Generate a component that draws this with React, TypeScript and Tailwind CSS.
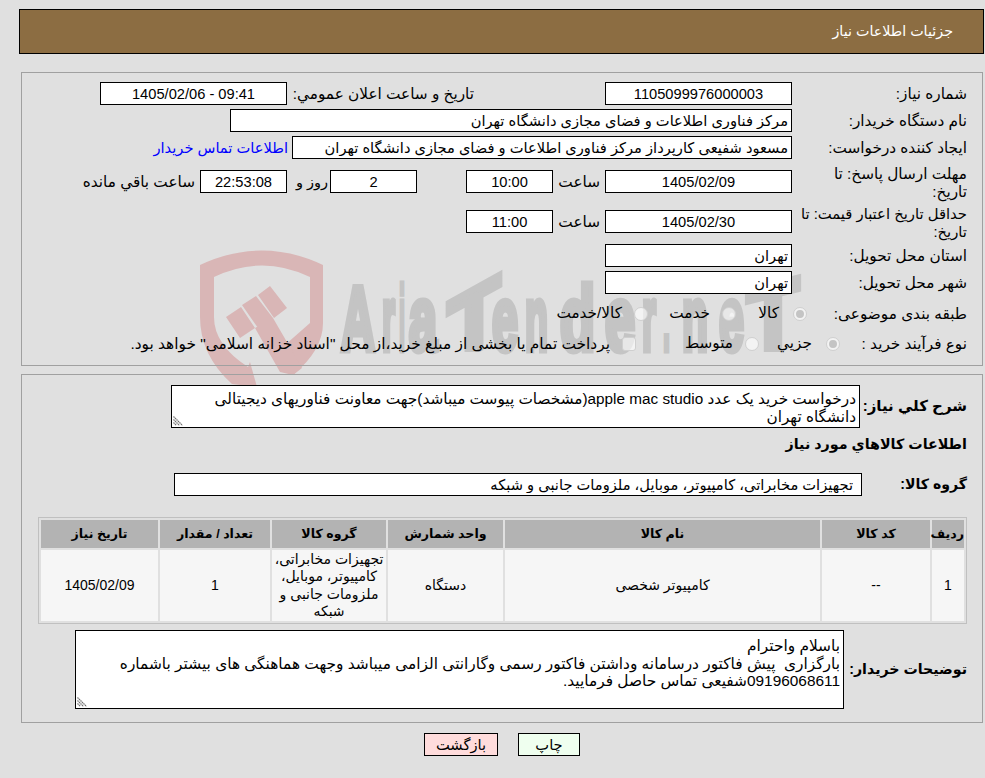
const fieldCls = 'h-[23px] shrink-0 border border-black bg-white text-[14.67px] text-black outline-none'

function Field({ value, w, center = true, bg = 'bg-white', ltr = false }: { value: string; w: string; center?: boolean; bg?: string; ltr?: boolean }) {
  return (
    <input
      readOnly
      dir={ltr ? 'ltr' : 'rtl'}
      value={value}
      className={`${fieldCls} ${w} ${bg} px-[3px] ${center ? 'text-center' : 'text-right'}`}
    />
  )
}

function Label({ children, w, bold = false }: { children: React.ReactNode; w: string; bold?: boolean }) {
  return <div className={`shrink-0 ${w} ${bold ? 'whitespace-nowrap font-bold' : 'pt-[2px]'}`}>{children}</div>
}

function Radio({ on = false, square = false }: { on?: boolean; square?: boolean }) {
  return (
    <span
      className={`flex h-[14px] w-[14px] shrink-0 items-center justify-center border border-[#cfcfcf] bg-white/60 ${
        square ? 'rounded-[3px]' : 'rounded-full'
      }`}
    >
      {on && <span className="h-[8px] w-[8px] rounded-full bg-[#c4c4c4]" />}
    </span>
  )
}

function Option({ text, w, on, square }: { text: string; w: string; on?: boolean; square?: boolean }) {
  return (
    <div className={`flex shrink-0 items-center ${on ? 'gap-[14px]' : 'gap-[12px]'} ${w}`}>
      <Radio on={on} square={square} />
      <span className="whitespace-nowrap">{text}</span>
    </div>
  )
}

function Grip() {
  return (
    <svg className="pointer-events-none absolute bottom-[2px] left-[2px]" width="10" height="10" viewBox="0 0 10 10">
      <path d="M0.5 3.5L6.5 9.5M0.5 0.5L9.5 9.5M0.5 6.5L3.5 9.5" stroke="#707070" strokeWidth="1.2" strokeDasharray="1.5 0.6" fill="none" />
    </svg>
  )
}

function Watermark() {
  const gray = '#c4c4c4'
  const letters: [string, number, number][] = [
    ['A', 341, 34],
    ['r', 382, 13],
    ['i', 399, 6],
    ['a', 409, 28],
    ['e', 492, 26],
    ['n', 525, 23],
    ['d', 560, 35],
    ['e', 605, 30],
    ['r', 642, 14],
    ['.', 663, 7],
    ['n', 682, 26],
    ['e', 719, 25],
  ]
  const common = {
    fill: gray,
    stroke: gray,
    strokeWidth: 7,
    fontWeight: 700,
    fontFamily: "'Liberation Sans', sans-serif",
    lengthAdjust: 'spacingAndGlyphs' as const,
  }
  return (
    <svg direction="ltr" className="pointer-events-none absolute left-0 top-0" width="985" height="778" viewBox="0 0 985 778">
      <defs>
        <clipPath id="wm-base">
          <rect x="300" y="240" width="600" height="112" />
        </clipPath>
      </defs>
      <path
        fill="#d9b6b6"
        fillRule="evenodd"
        d="M200 265Q262 236 323 265L323 323Q323 350 293 375L277 352L310 323L310 277Q262 254 214 277L214 317Q214 345 248 367L250 362L257 387L232 384Q200 355 200 317Z"
      />
      <path fill="#d9b6b6" d="M226 317L241 307L255 328L240 338ZM242 305L256 296L273 318L258 328ZM258 295L270 286L287 308L274 318ZM255 328L273 318L302 368L293 375L280 372Z" />
      {letters.map(([c, x, len], i) => (
        <text key={i} x={x} y={350} textLength={len} fontSize={90} {...common}>
          {c}
        </text>
      ))}
      <g clipPath="url(#wm-base)">
        <text transform="translate(448 366) skewY(-29)" textLength={52} fontSize={91} {...common}>
          T
        </text>
        <text transform="translate(747 358) skewY(-14)" textLength={52} fontSize={98} {...common}>
          T
        </text>
      </g>
    </svg>
  )
}

const columns = [
  { title: 'ردیف', w: 'w-[32px]' },
  { title: 'کد کالا', w: 'w-[108px]' },
  { title: 'نام کالا', w: 'w-[315px]' },
  { title: 'واحد شمارش', w: 'w-[115px]' },
  { title: 'گروه کالا', w: 'w-[114px]' },
  { title: 'تعداد / مقدار', w: 'w-[110px]' },
  { title: 'تاریخ نیاز', w: 'w-[117px]' },
]

const row = ['1', '--', 'کامپیوتر شخصی', 'دستگاه', 'تجهیزات مخابراتی، کامپیوتر، موبایل، ملزومات جانبی و شبکه', '1', '1405/02/09']

export default function App() {
  return (
    <div
      dir="rtl"
      className="relative h-[778px] w-[985px] overflow-hidden bg-[#e0e0e0] pt-[9px] font-['Liberation_Sans','DejaVu_Sans',sans-serif] text-[15.3px] text-black"
    >
      <Watermark />

      <div className="relative">
        {/* header */}
        <div className="ml-[19px] mr-[1px] flex h-[45px] items-center border border-black bg-[#8c6d42] pr-[30px] pt-[1px] text-[14.3px] text-white">
          جزئیات اطلاعات نیاز
        </div>

        {/* main info */}
        <div className="ml-[21px] mr-[2px] mt-[18px] h-[294px] border border-[#a0a0a0] pr-[15px] pt-[9px]">
          <div className="flex h-[23px] items-center">
            <Label w="w-[175px]">شماره نیاز:</Label>
            <Field w="w-[187px]" value="1105099976000003" />
            <div className="w-[131px] shrink-0" />
            <Label w="w-[187px]">تاریخ و ساعت اعلان عمومي:</Label>
            <Field w="w-[187px]" ltr value="1405/02/06 - 09:41" />
          </div>

          <div className="mt-[4px] flex h-[23px] items-center">
            <Label w="w-[175px]">نام دستگاه خریدار:</Label>
            <Field w="w-[562px]" center={false} value="مرکز فناوری اطلاعات و فضای مجازی دانشگاه تهران" />
          </div>

          <div className="mt-[4px] flex h-[23px] items-center">
            <Label w="w-[175px]">ایجاد کننده درخواست:</Label>
            <Field w="w-[500px]" center={false} value="مسعود شفیعی کارپرداز مرکز فناوری اطلاعات و فضای مجازی دانشگاه تهران" />
            <a className="mr-[4px] whitespace-nowrap text-[14.67px] text-[#0000ff]">اطلاعات تماس خریدار</a>
          </div>

          <div className="mt-[11px] flex h-[23px] items-center">
            <Label w="w-[175px] pl-[6px]">
              <div className="leading-[18px]">مهلت ارسال پاسخ: تا تاریخ:</div>
            </Label>
            <Field w="w-[187px]" value="1405/02/09" />
            <Label w="w-[52px] pr-[5px]">ساعت</Label>
            <Field w="w-[87px]" value="10:00" />
            <div className="w-[49px] shrink-0" />
            <Field w="w-[87px]" value="2" />
            <Label w="w-[43px] pr-[2px] text-[14.5px]">روز و</Label>
            <Field w="w-[87px]" bg="bg-[#ffffee]" value="22:53:08" />
            <span className="mr-[5px] whitespace-nowrap pt-[2px]">ساعت باقي مانده</span>
          </div>

          <div className="mt-[17px] flex h-[23px] items-center">
            <Label w="w-[175px] pl-[2px] text-[14.8px]">
              <div className="leading-[18px]">حداقل تاریخ اعتبار قیمت: تا تاریخ:</div>
            </Label>
            <Field w="w-[187px]" value="1405/02/30" />
            <Label w="w-[52px] pr-[5px]">ساعت</Label>
            <Field w="w-[87px]" value="11:00" />
          </div>

          <div className="mt-[11px] flex h-[23px] items-center">
            <Label w="w-[175px]">استان محل تحویل:</Label>
            <Field w="w-[187px]" center={false} value="تهران" />
          </div>

          <div className="mt-[4px] flex h-[23px] items-center">
            <Label w="w-[175px]">شهر محل تحویل:</Label>
            <Field w="w-[187px]" center={false} value="تهران" />
          </div>

          <div className="mt-[8px] flex h-[23px] items-center">
            <Label w="w-[160px]">طبقه بندی موضوعی:</Label>
            <Option w="w-[71px]" text="کالا" on />
            <Option w="w-[88px]" text="خدمت" />
            <Option w="w-[90px]" text="کالا/خدمت" />
          </div>

          <div className="mt-[7px] flex h-[23px] items-center">
            <Label w="w-[127px]">نوع فرآیند خرید :</Label>
            <Option w="w-[81px]" text="جزيي" on />
            <Option w="w-[123px]" text="متوسط" />
            <Option
              w="w-[500px] text-[15.4px]"
              square
              text='پرداخت تمام یا بخشی از مبلغ خرید،از محل "اسناد خزانه اسلامی" خواهد بود.'
            />
          </div>
        </div>

        {/* description + items */}
        <div className="ml-[21px] mr-[2px] mt-[8px] h-[349px] border border-[#a0a0a0] pl-[16px] pr-[15px] pt-[10px]">
          <div className="flex items-center">
            <Label w="w-[107px] text-[15px]" bold>شرح کلي نياز:</Label>
            <div className="relative flex">
              <textarea
                readOnly
                dir="rtl"
                className="h-[43px] w-[689px] resize-none border border-black bg-white px-[3px] pt-[4px] leading-[17.5px] outline-none"
                defaultValue="درخواست خرید یک عدد apple mac studio(مشخصات پیوست میباشد)جهت معاونت فناوریهای دیجیتالی دانشگاه تهران"
              />
              <Grip />
            </div>
          </div>

          <div className="mt-[6px] h-[20px] text-[14.3px] font-bold">اطلاعات کالاهاي مورد نياز</div>

          <div className="mt-[19px] flex items-center">
            <Label w="w-[105px] text-[14.1px]" bold>گروه کالا:</Label>
            <Field w="w-[688px] pr-[8px]" center={false} value="تجهیزات مخابراتی، کامپیوتر، موبایل، ملزومات جانبی و شبکه" />
          </div>

          <table className="mt-[21px] w-[928px] table-fixed border-separate border-spacing-[2px] border border-[#c0c0c0]">
            <thead>
              <tr>
                {columns.map(c => (
                  <th key={c.title} className={`${c.w} h-[28px] bg-[#b3b3b3] p-0 text-center text-[12.6px] font-bold`}>
                    {c.title}
                  </th>
                ))}
              </tr>
            </thead>
            <tbody>
              <tr>
                {row.map((v, i) => (
                  <td key={i} className="h-[71px] bg-[#f6f6f6] px-[1px] py-0 text-center text-[14px] leading-[17.3px]">
                    {v}
                  </td>
                ))}
              </tr>
            </tbody>
          </table>

          <div className="mt-[6px] flex items-center">
            <Label w="w-[123px] text-[14.2px]" bold>توضیحات خریدار:</Label>
            <div className="relative flex">
              <textarea
                readOnly
                dir="rtl"
                className="h-[79px] w-[769px] resize-none border border-black bg-white px-[3px] pt-[6px] text-[15.4px] leading-[17.5px] outline-none"
                defaultValue={'باسلام واحترام\nبارگزاری  پیش فاکتور درسامانه وداشتن فاکتور رسمی وگارانتی الزامی میباشد وجهت هماهنگی های بیشتر باشماره 09196068611شفیعی تماس حاصل فرمایید.'}
              />
              <Grip />
            </div>
          </div>
        </div>

        {/* actions */}
        <div className="mt-[10px] flex justify-center gap-[20px] pl-[19px] text-[14.67px]">
          <button className="h-[23px] w-[62px] border border-black bg-[#efffef]">چاپ</button>
          <button className="h-[23px] w-[74px] border border-black bg-[#ffdcdc]">بازگشت</button>
        </div>
      </div>
    </div>
  )
}
